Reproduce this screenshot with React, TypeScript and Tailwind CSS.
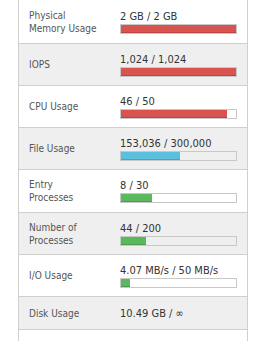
import React from 'react';

type Usage = {
  label: string;
  value: string;
  pct?: number;
  color?: string;
  h: string;
};

const rows: Usage[] = [
  { label: 'Physical Memory Usage', value: '2 GB / 2 GB', pct: 100, color: 'bg-[#d9534f]', h: 'h-[44px]' },
  { label: 'IOPS', value: '1,024 / 1,024', pct: 100, color: 'bg-[#d9534f]', h: 'h-[42px]' },
  { label: 'CPU Usage', value: '46 / 50', pct: 92, color: 'bg-[#d9534f]', h: 'h-[42px]' },
  { label: 'File Usage', value: '153,036 / 300,000', pct: 51.012, color: 'bg-[#5bc0de]', h: 'h-[42px]' },
  { label: 'Entry Processes', value: '8 / 30', pct: 26.67, color: 'bg-[#5cb85c]', h: 'h-[43px]' },
  { label: 'Number of Processes', value: '44 / 200', pct: 22, color: 'bg-[#5cb85c]', h: 'h-[42px]' },
  { label: 'I/O Usage', value: '4.07 MB/s / 50 MB/s', pct: 8.14, color: 'bg-[#5cb85c]', h: 'h-[42px]' },
  { label: 'Disk Usage', value: '10.49 GB / ∞', h: 'h-[33px]' },
];

const UsageRow: React.FC<{ row: Usage; odd: boolean }> = ({ row, odd }) => (
  <div className={`flex items-center border-b border-[#cfcfcf] ${row.h} ${odd ? 'bg-[#efefef]' : 'bg-white'}`}>
    <div className="w-[101px] shrink-0 pl-[10px] pr-[23px] text-[10px] leading-[13px] text-[#555]">{row.label}</div>
    <div className="flex-1 pr-[10px]">
      <div className="text-[11px] leading-[13px] text-[#333]">{row.value}</div>
      {row.pct !== undefined && (
        <div className="mt-[1px] h-[10px] border border-[#c8c8c8]">
          <div
            className={`h-full ${row.color} shadow-[inset_0_-1px_0_rgba(0,0,0,0.15)]`}
            style={{ width: `${row.pct}%` }}
          />
        </div>
      )}
    </div>
  </div>
);

export default function App() {
  return (
    <div className="h-[349px] w-[262px] bg-white" style={{ fontFamily: '"DejaVu Sans Condensed", "DejaVu Sans", sans-serif' }}>
      <div className="ml-[18px] w-[230px] border-x border-[#cfcfcf]">
        {rows.map((r, i) => (
          <UsageRow key={r.label} row={r} odd={i % 2 === 1} />
        ))}
        <div className="h-[11px] bg-white" />
      </div>
    </div>
  );
}
